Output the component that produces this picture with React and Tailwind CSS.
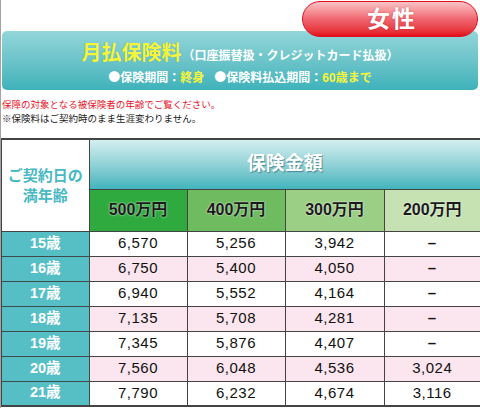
import React from 'react';

const rows = [
  { age: '15歳', v: ['6,570', '5,256', '3,942', '–'] },
  { age: '16歳', v: ['6,750', '5,400', '4,050', '–'] },
  { age: '17歳', v: ['6,940', '5,552', '4,164', '–'] },
  { age: '18歳', v: ['7,135', '5,708', '4,281', '–'] },
  { age: '19歳', v: ['7,345', '5,876', '4,407', '–'] },
  { age: '20歳', v: ['7,560', '6,048', '4,536', '3,024'] },
  { age: '21歳', v: ['7,790', '6,232', '4,674', '3,116'] },
];

const heads = [
  { label: '500万円', bg: 'bg-[#2faa3e]' },
  { label: '400万円', bg: 'bg-[#6fbb60]' },
  { label: '300万円', bg: 'bg-[#9ccf86]' },
  { label: '200万円', bg: 'bg-[#c6e2b2]' },
];

export default function App() {
  return (
    <div className="w-[480px] h-[408px] overflow-hidden bg-white border-l border-[#a3a3a3] font-['Liberation_Sans','Noto_Sans_CJK_JP',sans-serif]">
      <div className="relative h-[90px]">
        <div className="absolute left-[301px] top-[1px] w-[176px] h-[36px] rounded-full border-[1.5px] border-[#e0101f] bg-gradient-to-b from-[#f8c3c7] via-[#ef6571] to-[#e3061c] flex items-center justify-center z-10">
          <span className="text-white font-bold text-[23px] tracking-[2px] pl-[4px] [text-shadow:0_0_2px_rgba(150,0,0,0.4)]">女性</span>
        </div>
        <div className="absolute left-[1px] right-[2px] top-[31px] h-[59px] rounded-[5px] bg-gradient-to-b from-[#92d6d9] to-[#3db2ba] flex flex-col items-center pt-[9px]">
          <div className="flex items-baseline">
            <span className="text-[#f7f53a] font-bold text-[20px] leading-[26px] [text-shadow:0_0_1px_rgba(0,80,90,0.3)]">月払保険料</span>
            <span className="text-white font-bold text-[12px] ml-[1px]">（口座振替扱・クレジットカード払扱）</span>
          </div>
          <div className="flex items-center text-[12px] font-bold leading-[16px] mt-[3px] gap-[10px]">
            <span className="text-white"><span className="font-['Noto_Sans_CJK_JP',sans-serif]">●</span>保険期間：<span className="text-[#f7f53a]">終身</span></span>
            <span className="text-white"><span className="font-['Noto_Sans_CJK_JP',sans-serif]">●</span>保険料払込期間：<span className="text-[#f7f53a]">60歳まで</span></span>
          </div>
        </div>
      </div>
      <div className="pt-[8px] pl-[1px] text-[9.5px] leading-[14px]">
        <p className="text-[#e6162b]">保障の対象となる被保険者の年齢でご覧ください。</p>
        <p className="text-[#222]">※保険料はご契約時のまま生涯変わりません。</p>
      </div>
      <table className="mt-[12px] -ml-[1px] w-[480px] table-fixed border-collapse border-2 border-[#444]">
        <colgroup>
          <col className="w-[88px]" />
          <col className="w-[98px]" />
          <col className="w-[98px]" />
          <col className="w-[99px]" />
          <col className="w-[97px]" />
        </colgroup>
        <thead>
          <tr className="h-[50px]">
            <th rowSpan={2} className="bg-white border border-[#444] text-[#48b8c3] font-bold text-[15px] leading-[20px] pt-[2px]">
              ご契約日の<br />満年齢
            </th>
            <th colSpan={4} className="border border-[#444] bg-gradient-to-b from-[#d3eff0] to-[#3fb4bd] text-white font-bold text-[19px] [text-shadow:1px_1px_1px_rgba(0,60,70,0.45)]">
              保険金額
            </th>
          </tr>
          <tr className="h-[42px]">
            {heads.map((h) => (
              <th key={h.label} className={`${h.bg} border border-[#444] text-[#1a1a1a] font-bold text-[16px] [text-shadow:0_0_2px_#fff]`}>
                {h.label}
              </th>
            ))}
          </tr>
        </thead>
        <tbody>
          {rows.map((r, i) => (
            <tr key={r.age} className="h-[25px]">
              <td className="bg-[#56bec5] border border-[#3f4a4b] text-white font-bold text-[14.5px] text-center">{r.age}</td>
              {r.v.map((v, j) => (
                <td key={j} className={`${i % 2 ? 'bg-[#fbe5ee]' : 'bg-white'} border border-[#444] text-[#111] text-[15px] tracking-[0.5px] text-center ${v === '–' ? 'font-bold' : ''}`}>
                  {v}
                </td>
              ))}
            </tr>
          ))}
        </tbody>
      </table>
    </div>
  );
}
